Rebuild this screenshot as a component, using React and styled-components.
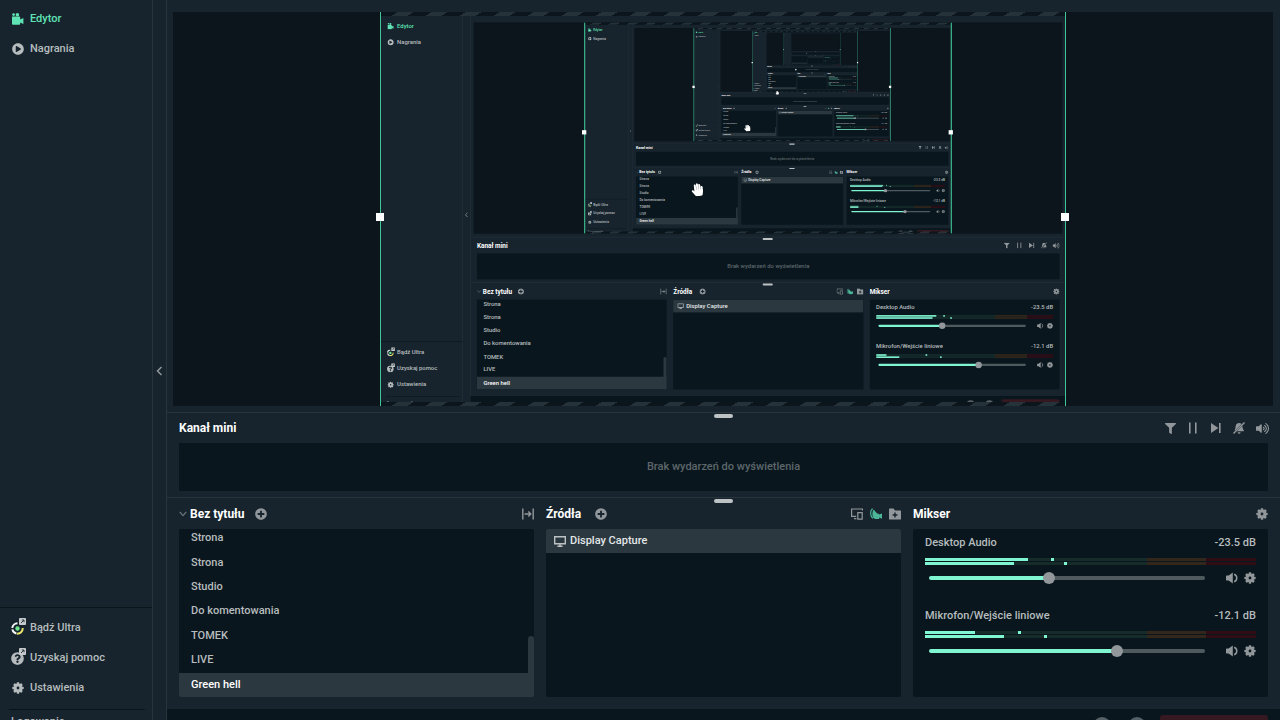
import React, { useId, useState } from 'react'
import styled, { createGlobalStyle } from 'styled-components'
import { FaFilter, FaHandPaper, FaPlayCircle, FaPlusCircle, FaQuestionCircle, FaVolumeUp } from 'react-icons/fa'

const colors = {
  background: '#17242d',
  section: '#09161d',
  border: '#28353d',
  selected: '#2b383f',
  text: '#b6bcbe',
  icon: '#91979a',
  teal: '#80f5d2',
}

const CAPTURE_SCALE = 0.536
const MAX_DEPTH = 5

const GlobalStyle = createGlobalStyle`
  * {
    box-sizing: border-box;
  }
  body {
    margin: 0;
    background: ${colors.background};
    color: ${colors.text};
    font-family: Roboto, "Liberation Sans", sans-serif;
    font-size: 11px;
    font-weight: 500;
    line-height: 16px;
  }
  button {
    border: 0;
    padding: 0;
    background: none;
    color: inherit;
    font: inherit;
    cursor: pointer;
  }
  svg {
    display: block;
  }
`

const Page = styled.div`
  height: 100vh;
  overflow: hidden;
`

const Shell = styled.div`
  display: flex;
  height: calc(100vh + 22px);
  background: ${colors.background};
`

const SideNav = styled.nav`
  display: flex;
  flex-direction: column;
  justify-content: space-between;
  flex: none;
  width: 153px;
  border-right: 1px solid ${colors.border};
`

const NavTop = styled.div`
  padding-top: 4px;
`

const NavBottom = styled.div`
  padding: 5px 0 8px;
  border-top: 1px solid #0a151b;
`

const NavDivider = styled.hr`
  height: 1px;
  margin: 6px 7px 0 9px;
  border: 0;
  background: #0a151b;
`

const NavItem = styled.a`
  display: flex;
  align-items: center;
  gap: 6px;
  height: 30px;
  padding-left: 11px;
  color: ${(p) => (p.$active ? '#5fe3b4' : colors.text)};
  text-decoration: none;
`

const NavLogin = styled(NavItem)`
  height: 24px;
`

const NavIcon = styled.span`
  position: relative;
  display: grid;
  place-items: center;
  width: 13px;
  height: 13px;
`

const ExternalBadge = styled.svg`
  position: absolute;
  top: -4px;
  right: -2px;
`

const NavToggle = styled.button`
  display: grid;
  place-items: center;
  flex: none;
  width: 14px;
  border-right: 1px solid ${colors.border};
`

const Main = styled.main`
  display: flex;
  flex-direction: column;
  flex: 1;
  min-width: 0;
`

const Preview = styled.section`
  display: flex;
  flex: 1;
  min-height: 0;
  padding: 12px 7px 6px 6px;
`

const Canvas = styled.div`
  display: flex;
  justify-content: center;
  flex: 1;
  min-width: 0;
  overflow: hidden;
  background: #0b151b;
`

const Capture = styled.div`
  position: relative;
  flex: none;
  width: 686px;
  height: 100%;
`

const CaptureClip = styled.div`
  height: 100%;
  padding: 4px 0 0 1px;
  overflow: hidden;
`

const CaptureScreen = styled.div`
  position: relative;
  width: calc(100% / ${CAPTURE_SCALE});
  transform: scale(${CAPTURE_SCALE});
  transform-origin: 0 0;
  pointer-events: none;
`

const Hatch = styled.div`
  position: absolute;
  left: 0;
  right: 0;
  ${(p) => p.$side}: 0;
  height: 4px;
  background: repeating-linear-gradient(150deg, #0b151b 0 9px, #263239 9px 17px);
`

const SelectionEdge = styled.div`
  position: absolute;
  top: 0;
  bottom: 0;
  ${(p) => p.$side}: 0;
  width: ${(p) => (p.$nested ? 2 : 1)}px;
  background: #3fc596;

  &::after {
    content: '';
    position: absolute;
    top: 51%;
    left: -4px;
    width: 8px;
    height: 8px;
    background: #fff;
  }
`

const HandCursor = styled(FaHandPaper)`
  position: absolute;
  left: ${(p) => p.$x}px;
  top: ${(p) => p.$y}px;
  width: 24px;
  height: 24px;
  color: #fff;
  transform: translate(-50%, -50%) rotate(-6deg);
`

const DockSection = styled.section`
  position: relative;
  flex: none;
  padding: 0 12px ${(p) => p.$bottom}px;
  border-top: 1px solid ${colors.border};
`

const ResizeGrip = styled.div`
  position: absolute;
  top: 1px;
  left: 50%;
  width: 19px;
  height: 4px;
  margin-left: -10px;
  border-radius: 2px;
  background: #bdc2c4;
`

const Header = styled.header`
  display: flex;
  align-items: center;
  height: ${(p) => p.$height}px;
`

const Title = styled.h2`
  margin: 0;
  color: #fff;
  font-size: 12px;
  font-weight: 700;
  line-height: 16px;
`

const IconButton = styled.button`
  display: grid;
  place-items: center;
  place-content: center;
  flex: none;
  width: 12px;
  height: 16px;
  color: ${(p) => (p.$on ? '#4bb798' : colors.icon)};
`

const CollapseButton = styled(IconButton)`
  width: 11px;
  justify-content: start;
`

const AddButton = styled(IconButton)`
  margin-left: ${(p) => p.$gap}px;
`

const Tools = styled.div`
  display: flex;
  align-items: center;
  gap: ${(p) => p.$gap}px;
  margin-left: auto;
`

const EventList = styled.div`
  display: grid;
  place-items: center;
  height: 48px;
  background: ${colors.section};
  color: #5d676c;
`

const Columns = styled.div`
  display: grid;
  grid-template-columns: repeat(3, minmax(0, 1fr));
  gap: 12px;
`

const Panel = styled.div`
  position: relative;
  display: flex;
  flex-direction: column;
  justify-content: ${(p) => (p.$scrolled ? 'flex-end' : 'flex-start')};
  height: 168px;
  padding: ${(p) => (p.$padded ? '5px 12px' : '0')};
  overflow: hidden;
  border-radius: 2px;
  background: ${colors.section};
`

const SceneList = styled.div`
  display: grid;
  grid-auto-rows: 1fr;
  flex: none;
  height: 171px;
`

const SceneRow = styled.button`
  padding-left: 12px;
  background: ${(p) => (p.$selected ? colors.selected : 'none')};
  color: ${(p) => (p.$selected ? '#fff' : colors.text)};
  text-align: left;
`

const ScrollThumb = styled.div`
  position: absolute;
  right: 0;
  bottom: 0;
  width: 6px;
  height: 61px;
  border-radius: 3px 3px 0 0;
  background: ${colors.selected};
`

const SourceRow = styled.button`
  display: flex;
  align-items: center;
  gap: 4px;
  height: 24px;
  padding-left: 8px;
  background: ${colors.selected};
  color: #e4e7e8;
`

const Channel = styled.div`
  height: 73px;
`

const ChannelHead = styled.div`
  display: flex;
  align-items: center;
  justify-content: space-between;
  height: 18px;
  margin-bottom: 6px;
`

const Meter = styled.div`
  display: grid;
  gap: 1px;
  margin-bottom: 5px;
`

const MeterBar = styled.div`
  position: relative;
  height: 3px;
  background: linear-gradient(90deg, #152c2a 0 67%, #33271b 67% 85%, #300c15 85%);
`

const MeterLevel = styled.div`
  height: 3px;
  background: ${colors.teal};
`

const MeterPeak = styled.div`
  position: absolute;
  top: 0;
  width: 3px;
  height: 3px;
  background: ${colors.teal};
`

const ChannelControls = styled.div`
  display: flex;
  align-items: center;
  gap: 6px;
  padding-left: 4px;
`

const Slider = styled.input`
  appearance: none;
  flex: 1;
  min-width: 0;
  height: 16px;
  margin: 0 15px 0 0;
  background: none;

  &::-webkit-slider-runnable-track {
    height: 4px;
    border-radius: 2px;
    background: linear-gradient(
      90deg,
      ${colors.teal} var(--level),
      #4f5a5f var(--level)
    );
  }
  &::-webkit-slider-thumb {
    appearance: none;
    width: 12px;
    height: 12px;
    margin-top: -4px;
    border-radius: 50%;
    background: ${colors.icon};
  }
`

const Footer = styled.footer`
  display: flex;
  align-items: center;
  justify-content: flex-end;
  gap: 17px;
  flex: none;
  height: 33px;
  padding: 0 12px;
  background: ${colors.section};
`

const RoundButton = styled.button`
  width: 18px;
  height: 18px;
  border-radius: 50%;
  background: #566167;
`

const LiveButton = styled.button`
  width: 108px;
  height: 22px;
  margin-left: -3px;
  border-radius: 3px;
  background: #351820;
`

const EditorIcon = () => (
  <svg width="12" height="12" viewBox="0 0 12 12" fill="currentColor">
    <circle cx="1.6" cy="1.6" r="1.4" />
    <circle cx="5.4" cy="1.8" r="1.8" />
    <path d="M0 3.6h7.2q1 0 1 1v2L11.4 5v6L8.2 9.4v1.4q0 1-1 1H1q-1 0-1-1z" />
  </svg>
)

const GearIcon = () => (
  <svg width="12" height="12" viewBox="0 0 12 12" fill="currentColor">
    <circle cx="6" cy="6" r="2.9" fill="none" stroke="currentColor" strokeWidth="3" />
    {[0, 45, 90, 135, 180, 225, 270, 315].map((angle) => (
      <rect key={angle} x="4.7" y=".3" width="2.6" height="2.5" rx=".7" transform={`rotate(${angle} 6 6)`} />
    ))}
  </svg>
)

const SpeakerIcon = () => (
  <svg width="12" height="12" viewBox="0 0 12 12">
    <path d="M0 4.2q0-.6 .6-.6h2L6.800 .6v10.800L2.600 8.400h-2q-.6 0-.6-.6z" fill="currentColor" />
    <path d="M8.200 2.200q2.600 1.200 2.600 3.800t-2.600 3.800" fill="none" stroke="currentColor" strokeWidth="1.5" />
  </svg>
)

const UltraIcon = () => (
  <svg width="13" height="13" viewBox="0 0 13 13" fill="none" strokeWidth="2">
    <path d="M1.3 6A5.2 5.2 0 0 1 6.5 1.3" stroke="#f4f6f6" />
    <path d="M1.4 7.4a5.2 5.2 0 0 0 4 4.2" stroke="#f4f6f6" />
    <path d="M5.8 11.6A5.2 5.2 0 0 0 11.7 6" stroke="#e9e36a" />
    <circle cx="6.5" cy="6.5" r="1.2" fill="#6be68b" stroke="#6be68b" />
  </svg>
)

const ExternalIcon = () => (
  <ExternalBadge width="7" height="7" viewBox="0 0 7 7">
    <rect width="7" height="7" rx="1" fill="#c6cacc" />
    <path d="M2 5l3-3M2.8 2H5v2.2" fill="none" stroke="#2b383f" />
  </ExternalBadge>
)

const ChevronLeft = () => (
  <svg width="7" height="10" viewBox="0 0 7 10" fill="none" stroke="#91979a" strokeWidth="1.5">
    <path d="M5.5 1L1.5 5l4 4" />
  </svg>
)

const ChevronDown = () => (
  <svg width="8" height="6" viewBox="0 0 8 6" fill="none" stroke="#69747a" strokeWidth="1.2">
    <path d="M.8 1L4 4.6 7.2 1" />
  </svg>
)

const PauseIcon = () => (
  <svg width="12" height="12" viewBox="0 0 12 12" fill="currentColor">
    <path d="M2 .5h1.6v11H2zM8 .5h1.6v11H8z" />
  </svg>
)

const SkipIcon = () => (
  <svg width="12" height="12" viewBox="0 0 12 12" fill="currentColor">
    <path d="M1 1l7.4 5L1 11zM9 1h1.6v10H9z" />
  </svg>
)

const MuteAlertsIcon = () => (
  <svg width="12" height="12" viewBox="0 0 12 12" fill="currentColor">
    <path d="M1.4 8.2c1-.8 1-2 1.2-3.6C2.8 2.4 4.2 1 6 1c1.1 0 2 .4 2.6 1.1L2.2 8.600zM9.3 3.800c.4 2 .2 3.300 1.500 4.600v.9H4zM4.600 10.200h3q-.3 1.500-1.500 1.500t-1.500-1.500z" />
    <path d="M.5 11.400L11.500 .5" stroke="currentColor" strokeWidth="1.4" />
  </svg>
)

const FitIcon = () => (
  <svg width="12" height="12" viewBox="0 0 12 12" fill="none" stroke="currentColor" strokeWidth="1.4">
    <path d="M.8 .5v11M11.2 .5v11M2.5 6h6M6.3 3.500L8.800 6 6.300 8.500" />
  </svg>
)

const DevicesIcon = () => (
  <svg width="12" height="12" viewBox="0 0 12 12" fill="none" stroke="currentColor" strokeWidth="1.2">
    <path d="M11.4 2.600V1H.6v7.400h4.600M3 10.600h2.400M6.800 4.600h4.400v6.600H6.800z" />
  </svg>
)

const SelectiveIcon = () => (
  <svg width="12" height="12" viewBox="0 0 12 12" fill="currentColor">
    <path d="M2.600 .8C-.2 2.800 0 8 3 10.400" fill="none" stroke="currentColor" strokeWidth="1.2" />
    <path d="M3.600 1.400l2.600 3.200q.8 1.200 2.400 1.200l.6 .8L12 5.400v5.400L9.200 9.600v1.400H5.400C2 10 1.600 4.800 3.600 1.400z" />
  </svg>
)

const FolderAddIcon = () => (
  <svg width="12" height="12" viewBox="0 0 12 12">
    <path d="M0 1q0-.6 .6-.6h4L6 2.400h5.400q.6 0 .6 .6v8q0 .6-.6 .6H.6Q0 11.600 0 11z" fill="currentColor" />
    <path d="M6 4.600v4.800M3.600 7h4.800" stroke="#17242d" strokeWidth="1.4" />
  </svg>
)

const MonitorIcon = () => (
  <svg width="12" height="11" viewBox="0 0 12 11" fill="none" stroke="#bdc2c4" strokeWidth="1.4">
    <path d="M.7 .8h10.600v7H.7zM3.400 10.200h5.200M6 8v2" />
  </svg>
)

const scenes = ['Strona', 'Strona', 'Studio', 'Do komentowania', 'TOMEK', 'LIVE', 'Green hell']

const channels = [
  { name: 'Desktop Audio', db: '-23.5 dB', volume: 43, peaks: [38, 42] },
  { name: 'Mikrofon/Wejście liniowe', db: '-12.1 dB', volume: 69, peaks: [28, 36] },
]

// meter levels per capture depth, the capture lags behind the live mixer
const levels = [
  [[31, 27], [15, 24]],
  [[34, 32], [6, 13]],
  [[35, 34], [9, 9]],
]

const cursors = [
  null,
  { x: 590, y: 324 },
  { x: 566, y: 360 },
  { x: 541, y: 414 },
  { x: 526, y: 460 },
  { x: 520, y: 459 },
]

const MixerChannel = ({ channel, level }) => {
  const id = useId()
  const [volume, setVolume] = useState(channel.volume)

  return (
    <Channel>
      <ChannelHead>
        <label htmlFor={id}>{channel.name}</label>
        <span>{channel.db}</span>
      </ChannelHead>
      <Meter>
        {level.map((value, i) => (
          <MeterBar key={i}>
            <MeterLevel style={{ width: `${value}%` }} />
            <MeterPeak style={{ left: `${channel.peaks[i]}%` }} />
          </MeterBar>
        ))}
      </Meter>
      <ChannelControls>
        <Slider
          id={id}
          type="range"
          min="0"
          max="100"
          value={volume}
          onChange={(e) => setVolume(Number(e.target.value))}
          style={{ '--level': `${volume}%` }}
        />
        <IconButton aria-label="Wycisz"><SpeakerIcon /></IconButton>
        <IconButton aria-label="Ustawienia kanału"><GearIcon /></IconButton>
      </ChannelControls>
    </Channel>
  )
}

const DisplayCapture = ({ depth }) => {
  const cursor = cursors[depth + 1]

  return (
    <Capture>
      <CaptureClip>
        <CaptureScreen inert aria-hidden="true">
          <Studio depth={depth + 1} />
          {cursor && <HandCursor $x={cursor.x} $y={cursor.y} />}
        </CaptureScreen>
      </CaptureClip>
      <Hatch $side="top" />
      <Hatch $side="bottom" />
      <SelectionEdge $side="left" $nested={depth > 0} />
      <SelectionEdge $side="right" $nested={depth > 0} />
    </Capture>
  )
}

const Studio = ({ depth = 0 }) => {
  const [selected, setSelected] = useState(scenes.length - 1)
  const mixerLevels = levels[Math.min(depth, levels.length - 1)]

  return (
    <Shell>
      <SideNav>
        <NavTop>
          <NavItem href="#edytor" $active>
            <NavIcon><EditorIcon /></NavIcon>
            Edytor
          </NavItem>
          <NavItem href="#nagrania">
            <NavIcon><FaPlayCircle size={12} /></NavIcon>
            Nagrania
          </NavItem>
        </NavTop>
        <NavBottom>
          <NavItem href="#ultra">
            <NavIcon><UltraIcon /><ExternalIcon /></NavIcon>
            Bądź Ultra
          </NavItem>
          <NavItem href="#pomoc">
            <NavIcon><FaQuestionCircle size={13} /><ExternalIcon /></NavIcon>
            Uzyskaj pomoc
          </NavItem>
          <NavItem href="#ustawienia">
            <NavIcon><GearIcon /></NavIcon>
            Ustawienia
          </NavItem>
          <NavDivider />
          <NavLogin href="#logowanie">Logowanie</NavLogin>
        </NavBottom>
      </SideNav>
      <NavToggle aria-label="Zwiń menu"><ChevronLeft /></NavToggle>

      <Main>
        <Preview>
          <Canvas>{depth < MAX_DEPTH && <DisplayCapture depth={depth} />}</Canvas>
        </Preview>

        <DockSection $bottom={6}>
          <ResizeGrip />
          <Header $height={30}>
            <Title>Kanał mini</Title>
            <Tools $gap={11}>
              <IconButton aria-label="Filtruj"><FaFilter size={11} /></IconButton>
              <IconButton aria-label="Wstrzymaj"><PauseIcon /></IconButton>
              <IconButton aria-label="Pomiń"><SkipIcon /></IconButton>
              <IconButton aria-label="Wycisz alerty"><MuteAlertsIcon /></IconButton>
              <IconButton aria-label="Głośność"><FaVolumeUp size={13} /></IconButton>
            </Tools>
          </Header>
          <EventList>Brak wydarzeń do wyświetlenia</EventList>
        </DockSection>

        <DockSection $bottom={12}>
          <ResizeGrip />
          <Columns>
            <div>
              <Header $height={31}>
                <CollapseButton aria-label="Kolekcje scen"><ChevronDown /></CollapseButton>
                <Title>Bez tytułu</Title>
                <AddButton $gap={10} aria-label="Dodaj scenę"><FaPlusCircle size={12} /></AddButton>
                <Tools $gap={7}>
                  <IconButton aria-label="Przejścia"><FitIcon /></IconButton>
                </Tools>
              </Header>
              <Panel $scrolled>
                <SceneList>
                  {scenes.map((scene, i) => (
                    <SceneRow key={i} $selected={i === selected} onClick={() => setSelected(i)}>
                      {scene}
                    </SceneRow>
                  ))}
                </SceneList>
                <ScrollThumb />
              </Panel>
            </div>
            <div>
              <Header $height={31}>
                <Title>Źródła</Title>
                <AddButton $gap={14} aria-label="Dodaj źródło"><FaPlusCircle size={12} /></AddButton>
                <Tools $gap={7}>
                  <IconButton aria-label="Podwójne wyjście"><DevicesIcon /></IconButton>
                  <IconButton aria-label="Nagrywanie selektywne" $on><SelectiveIcon /></IconButton>
                  <IconButton aria-label="Dodaj folder"><FolderAddIcon /></IconButton>
                </Tools>
              </Header>
              <Panel>
                <SourceRow><MonitorIcon />Display Capture</SourceRow>
              </Panel>
            </div>
            <div>
              <Header $height={31}>
                <Title>Mikser</Title>
                <Tools $gap={7}>
                  <IconButton aria-label="Ustawienia miksera"><GearIcon /></IconButton>
                </Tools>
              </Header>
              <Panel $padded>
                {channels.map((channel, i) => (
                  <MixerChannel key={channel.name} channel={channel} level={mixerLevels[i]} />
                ))}
              </Panel>
            </div>
          </Columns>
        </DockSection>

        <Footer>
          <RoundButton aria-label="Nagrywaj" />
          <RoundButton aria-label="Powtórka" />
          <LiveButton aria-label="Na żywo" />
        </Footer>
      </Main>
    </Shell>
  )
}

const App = () => {
  return (
    <Page>
      <GlobalStyle />
      <Studio />
    </Page>
  )
}

export default App
